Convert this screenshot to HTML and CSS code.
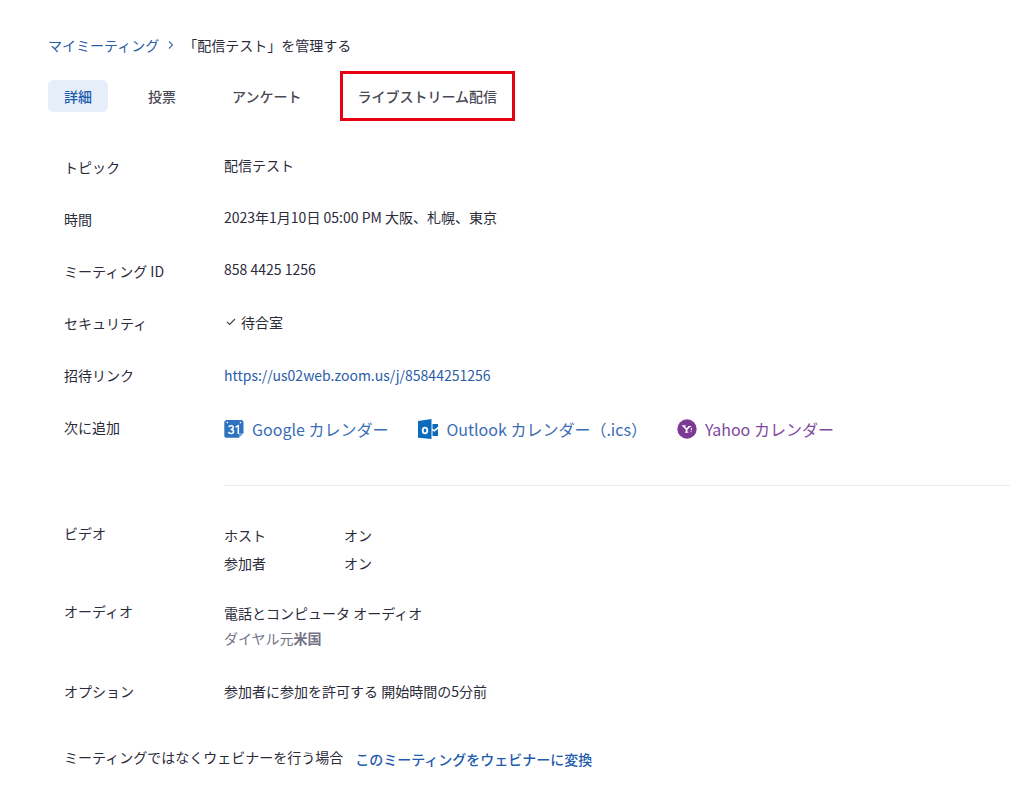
FILE: index.html
```html
<!DOCTYPE html>
<html lang="ja">
<head>
<meta charset="utf-8">
<meta name="viewport" content="width=device-width, initial-scale=1">
<title>「配信テスト」を管理する</title>
<link rel="stylesheet" href="styles.css">
</head>
<body>
<main class="page">
  <nav class="breadcrumb" aria-label="パンくず">
    <a href="#">マイミーティング</a>
    <svg class="chevron" viewBox="0 0 8 10" aria-hidden="true"><path d="M2 1.5 5.5 5 2 8.5"/></svg>
    <span>「配信テスト」を管理する</span>
  </nav>

  <div class="tabs" role="tablist">
    <button class="tab tab-active" role="tab" aria-selected="true">詳細</button>
    <button class="tab" role="tab" aria-selected="false">投票</button>
    <button class="tab" role="tab" aria-selected="false">アンケート</button>
    <button class="tab tab-marked" role="tab" aria-selected="false">ライブストリーム配信</button>
  </div>

  <dl class="details">
    <div class="row">
      <dt>トピック</dt>
      <dd class="raised">配信テスト</dd>
    </div>
    <div class="row">
      <dt>時間</dt>
      <dd class="raised">2023年1月10日 05:00 PM 大阪、札幌、東京</dd>
    </div>
    <div class="row">
      <dt>ミーティング ID</dt>
      <dd class="raised">858 4425 1256</dd>
    </div>
    <div class="row">
      <dt>セキュリティ</dt>
      <dd class="raised security"><svg class="check" viewBox="0 0 10 8" aria-hidden="true"><path d="M1 4 3.7 6.5 9 1"/></svg>待合室</dd>
    </div>
    <div class="row">
      <dt>招待リンク</dt>
      <dd><a href="#">https://us02web.zoom.us/j/85844251256</a></dd>
    </div>
    <div class="row">
      <dt>次に追加</dt>
      <dd class="calendars">
        <a class="calendar" href="#">
          <svg viewBox="0 0 20 20" aria-hidden="true">
            <path fill="#2f73c0" d="M1.500 1h17v1.200h1V14l-4.700 4.700H1.500L.3 17.500V2.200h1.200z"/>
            <path fill="#75a5dc" d="M15 18.500V14.200h4.300z"/>
            <path fill="#fff" d="M2.700 2.700h1.300v1.600H2.700zM15.800 2.700h1.300v1.600h-1.300z"/>
            <path fill="none" stroke="#fff" stroke-width="1.500" d="M4.800 8.100C5.300 6.300 9.200 6.200 9.200 8.500c0 1.400-1.200 1.900-2.600 1.900 1.600 0 2.900.5 2.900 2.200 0 2.700-4.500 2.500-5 .3M11.500 8.200l2.800-1.500v8.400"/>
          </svg>
          <span>Google カレンダー</span>
        </a>
        <a class="calendar" href="#">
          <svg viewBox="0 0 20 20" aria-hidden="true">
            <path fill="#0c6cbb" d="M0 2 13.500 0v20L0 18.700z"/>
            <path fill="#0c6cbb" d="M14.500 5H20v2.800l-3.800 3-1.700-1.100zM14.500 11.600l1.800 1.200 3.700-2.900V17h-5.500z"/>
            <ellipse cx="7" cy="11.500" rx="2.300" ry="2.900" fill="none" stroke="#fff" stroke-width="1.800"/>
          </svg>
          <span>Outlook カレンダー（.ics）</span>
        </a>
        <a class="calendar calendar-yahoo" href="#">
          <svg viewBox="0 0 20 20" aria-hidden="true">
            <circle cx="10" cy="10" r="9.700" fill="#7b3b95"/>
            <path fill="none" stroke="#fff" stroke-width="1.600" d="m6.300 7 3.300 3.400 2.700-2.700M9.600 10.200v3"/>
            <path fill="none" stroke="#fff" stroke-width="1" d="M4.800 6.800h4M11 7.500h3.200M7.900 13.200h3.500M14.500 9l-.3 2.300M14 12.200v1"/>
          </svg>
          <span>Yahoo カレンダー</span>
        </a>
      </dd>
    </div>
  </dl>

  <hr class="divider">

  <dl class="details settings">
    <div class="row">
      <dt>ビデオ</dt>
      <dd class="lowered video">
        <span>ホスト</span><span>オン</span>
        <span>参加者</span><span>オン</span>
      </dd>
    </div>
    <div class="row">
      <dt>オーディオ</dt>
      <dd class="lowered audio">
        <span>電話とコンピュータ オーディオ</span>
        <span class="muted">ダイヤル元<b>米国</b></span>
      </dd>
    </div>
    <div class="row">
      <dt>オプション</dt>
      <dd>参加者に参加を許可する 開始時間の5分前</dd>
    </div>
  </dl>

  <p class="convert">
    <span>ミーティングではなくウェビナーを行う場合</span>
    <a href="#">このミーティングをウェビナーに変換</a>
  </p>
</main>
</body>
</html>
```
FILE: styles.css
```css
* {
  box-sizing: border-box;
}

body {
  margin: 0;
  background: #fff;
  color: #2b2b3a;
  font: 14px/20px "Noto Sans CJK JP", "Noto Sans", sans-serif;
}

a {
  color: #2a5da8;
  text-decoration: none;
}

.page {
  padding: 35px 15px 35px 48px;
}

.breadcrumb {
  display: flex;
  align-items: center;
  gap: 8px;
}

.chevron {
  width: 8px;
  height: 10px;
  fill: none;
  stroke: #4b6fa8;
  stroke-width: 1.2;
}

.tabs {
  display: flex;
  flex-wrap: wrap;
  gap: 24px;
  margin-top: 25px;
}

.tab {
  position: relative;
  padding: 6px 16px;
  border: 0;
  border-radius: 6px;
  background: none;
  color: #4a4a55;
  font: inherit;
  font-weight: 500;
}

.tab-active {
  background: #e6eef9;
  color: #1f5cad;
}

.tab-marked::after {
  content: "";
  position: absolute;
  inset: -9px -2px -9px -1px;
  border: 3px solid #e60012;
}

.details {
  display: flex;
  flex-direction: column;
  gap: 32px;
  margin: 0;
  padding: 45px 0 0 16px;
}

.row {
  display: grid;
  grid-template-columns: 160px 1fr;
}

.row dd {
  margin: 0;
}

.row .raised {
  margin-top: -2px;
}

.row .lowered {
  margin-top: 2px;
}

.security {
  display: flex;
  align-items: center;
  gap: 5px;
}

.check {
  width: 10px;
  height: 8px;
  margin-left: 2px;
  fill: none;
  stroke: #44444f;
  stroke-width: 1.2;
}

.row .calendars {
  display: flex;
  flex-wrap: wrap;
  column-gap: 30px;
  margin-top: 2px;
}

.calendar {
  display: flex;
  align-items: center;
  gap: 8px;
  color: #3a6db5;
  font-size: 16px;
}

.calendar svg {
  width: 20px;
  height: 20px;
}

.calendar-yahoo {
  color: #7e48a0;
}

.divider {
  height: 1px;
  margin: 46px 0 0 176px;
  border: 0;
  background: #ebebf2;
}

.settings {
  gap: 28px;
  padding-top: 37px;
}

.video {
  display: grid;
  grid-template-columns: 120px 1fr;
  row-gap: 8px;
}

.audio {
  display: flex;
  flex-direction: column;
  gap: 5px;
  padding-bottom: 5px;
}

.muted {
  color: #747487;
}

.convert {
  display: flex;
  flex-wrap: wrap;
  gap: 12px;
  margin: 46px 0 0 16px;
}

.convert a {
  margin-top: 2px;
  color: #1f5cad;
  font-weight: 500;
}
```
